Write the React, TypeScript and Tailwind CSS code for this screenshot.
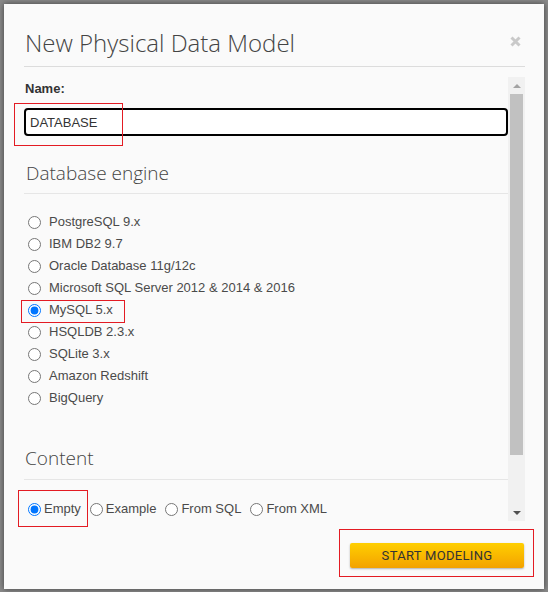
import React from "react";

const ENGINES = [
  "PostgreSQL 9.x",
  "IBM DB2 9.7",
  "Oracle Database 11g/12c",
  "Microsoft SQL Server 2012 & 2014 & 2016",
  "MySQL 5.x",
  "HSQLDB 2.3.x",
  "SQLite 3.x",
  "Amazon Redshift",
  "BigQuery",
];

const CONTENT_OPTIONS = ["Empty", "Example", "From SQL", "From XML"];

const heading = "font-['Open_Sans',sans-serif] font-light text-[#444]";
const body = "font-['Liberation_Sans',Arial,sans-serif]";

function Radio({ checked, name }: { checked?: boolean; name: string }) {
  return (
    <input
      type="radio"
      name={name}
      defaultChecked={checked}
      className="m-0 h-[13px] w-[13px] shrink-0 accent-[#0075ff]"
    />
  );
}

function Scrollbar() {
  return (
    <div className="flex w-[17px] shrink-0 flex-col items-center bg-[#f1f1f1]">
      <div className="flex h-[17px] w-full items-center justify-center">
        <div className="h-0 w-0 border-x-[4px] border-b-[4px] border-x-transparent border-b-[#a3a3a3]" />
      </div>
      <div className="h-[361px] w-[13px] bg-[#c1c1c1]" />
      <div className="flex-1" />
      <div className="flex h-[17px] w-full items-center justify-center">
        <div className="h-0 w-0 border-x-[4px] border-t-[4px] border-x-transparent border-t-[#505050]" />
      </div>
    </div>
  );
}

export default function App() {
  return (
    <div className="h-[592px] w-[548px] overflow-hidden bg-[#8a8a8a] pl-[4px] pt-[4px]">
      <div className="flex h-[585px] w-[540px] flex-col bg-[#fafafa] pl-5 pr-[19px] shadow-[0_0_6px_rgba(0,0,0,0.55)]">
        {/* header */}
        <div className="flex items-start justify-between pt-[23px]">
          <h1 className={`${heading} h-[32px] pl-px text-[24px] leading-[32px]`}>New Physical Data Model</h1>
          <svg width="11" height="11" viewBox="0 0 11 11" className="mr-[4px] mt-[9px]">
            <path d="M1.5 1.5 L9.5 9.5 M9.5 1.5 L1.5 9.5" stroke="#c9c9c9" strokeWidth="3" />
          </svg>
        </div>
        <div className="mt-[7px] h-px bg-[#dcdcdc]" />

        {/* scroll area */}
        <div className="mt-[10px] flex h-[444px]">
          <div className="flex min-w-0 flex-1 flex-col pt-[4px]">
            <label className={`${body} pl-px text-[13px] font-bold leading-4 text-[#333]`}>Name:</label>
            <div className="relative mt-[11px]">
              <input
                defaultValue="DATABASE"
                className={`${body} h-[28px] w-full rounded-[4px] border-2 border-black bg-white px-[4px] text-[13px] text-[#333] outline-none`}
              />
              <div className="pointer-events-none absolute -left-[10px] -top-[5px] h-[43px] w-[109px] border border-[#e31b23]" />
            </div>

            <h2 className={`${heading} mt-[25px] pl-[2px] text-[19px] leading-6`}>Database engine</h2>
            <div className="mt-[8px] h-px bg-[#e6e6e6]" />

            <div className="mt-[17px] flex flex-col">
              {ENGINES.map((e) => (
                <label key={e} className="relative flex h-[22px] items-center gap-[8px] pl-[4px]">
                  <Radio name="engine" checked={e === "MySQL 5.x"} />
                  <span className={`${body} text-[13px] text-[#4a4a4a]`}>{e}</span>
                  {e === "MySQL 5.x" && (
                    <div className="pointer-events-none absolute -left-[3px] top-px h-[23px] w-[104px] border border-[#e31b23]" />
                  )}
                </label>
              ))}
            </div>

            <h2 className={`${heading} mt-[37px] pl-px text-[19px] leading-6`}>Content</h2>
            <div className="mt-[9px] h-px bg-[#e6e6e6]" />

            <div className="relative mt-[18px] flex h-[22px] items-center gap-[9px] pl-[4px]">
              {CONTENT_OPTIONS.map((o) => (
                <label key={o} className="flex items-center gap-[3px]">
                  <Radio name="content" checked={o === "Empty"} />
                  <span className={`${body} text-[13px] text-[#4a4a4a]`}>{o}</span>
                </label>
              ))}
              <div className="pointer-events-none absolute -left-[6px] -top-[8px] h-[37px] w-[70px] border border-[#e31b23]" />
            </div>
          </div>
          <Scrollbar />
        </div>

        {/* footer */}
        <div className="mt-[21px] flex justify-end pr-px">
          <div className="relative">
            <button className="h-[25px] w-[174px] rounded-[2px] bg-gradient-to-b from-[#ffcf00] to-[#f3a200] font-['Roboto',sans-serif] text-[13px] font-normal tracking-[0.3px] text-[#333] shadow-[0_1px_2px_rgba(0,0,0,0.3)]">
              START MODELING
            </button>
            <div className="pointer-events-none absolute -left-[11px] -right-[10px] -top-[13px] -bottom-[9px] border border-[#e31b23]" />
          </div>
        </div>
      </div>
    </div>
  );
}
